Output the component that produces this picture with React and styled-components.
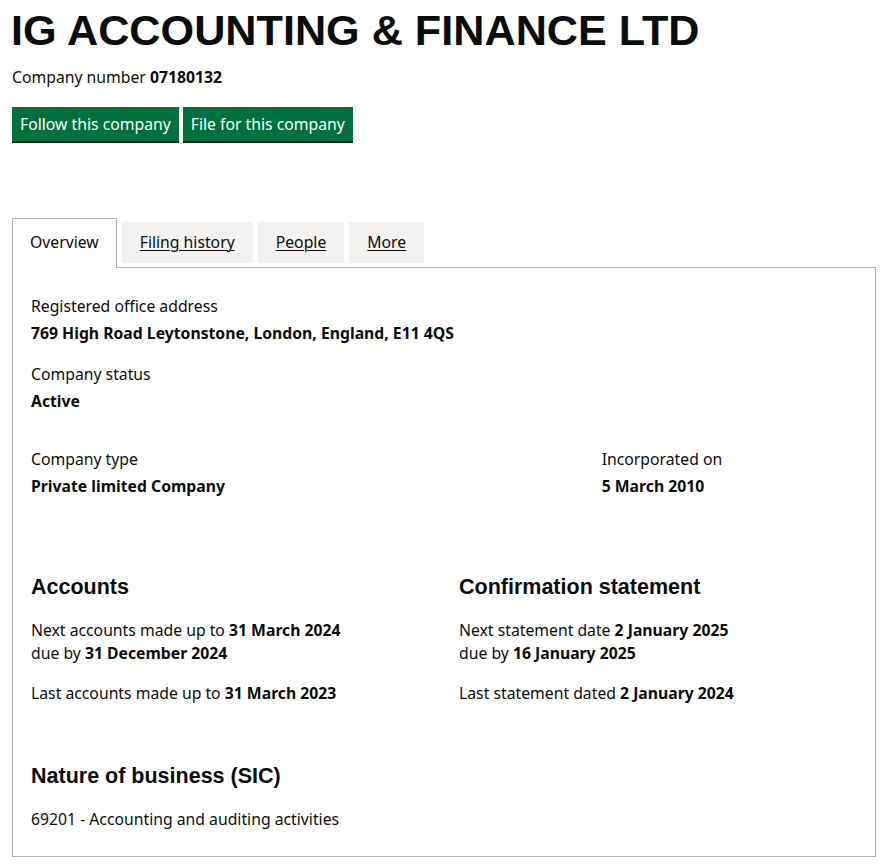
import React from 'react'
import styled, { createGlobalStyle } from 'styled-components'

const GlobalStyle = createGlobalStyle`
  * { box-sizing: border-box; }
  body {
    margin: 0;
    background: #fff;
    color: #0b0c0c;
    font-family: "Noto Sans", "Liberation Sans", Arial, sans-serif;
    font-size: 15.75px;
    line-height: 23px;
  }
`

const Page = styled.main`
  width: 864px;
  margin-left: 12px;
  padding-top: 9px;
  padding-bottom: 9px;
`

const Title = styled.h1`
  margin: 0 0 0 -1px;
  font-family: "Liberation Sans", Arial, sans-serif;
  font-weight: 700;
  font-size: 43.2px;
  line-height: 43px;
`

const CompanyNumber = styled.p`
  margin: 14px 0 0;
`

const ButtonGroup = styled.div`
  display: flex;
  gap: 4px;
  margin-top: 18px;
`

const Button = styled.button`
  height: 34px;
  padding: 0 8px;
  border: 0;
  background: #00703c;
  box-shadow: 0 2px 0 #002d18;
  color: #fff;
  font-family: inherit;
  font-size: 15.75px;
  line-height: 34px;
  cursor: pointer;
`

const TabList = styled.ul`
  display: flex;
  align-items: flex-end;
  gap: 5px;
  margin: 77px 0 0;
  padding: 0;
  list-style: none;
`

const Tab = styled.li`
  position: relative;
  z-index: ${p => (p.$active ? 1 : 0)};
  height: ${p => (p.$active ? '50px' : '41px')};
  margin-bottom: ${p => (p.$active ? '-1px' : '4px')};
  padding: ${p => (p.$active ? '12px 17px 0' : '0 18px')};
  background: ${p => (p.$active ? '#fff' : '#f3f2f1')};
  border: ${p => (p.$active ? '1px solid #b1b4b6' : '0')};
  border-bottom: 0;
  display: flex;
  align-items: ${p => (p.$active ? 'flex-start' : 'center')};

  a {
    color: #0b0c0c;
    text-decoration: ${p => (p.$active ? 'none' : 'underline')};
    text-underline-offset: 2px;
    text-decoration-thickness: 1px;
  }
`

const Panel = styled.section`
  border: 1px solid #b1b4b6;
  padding: 27px 18px 25px;
`

const Row = styled.div`
  display: flex;
  margin: ${p => p.$top || 0} -15px 0;
`

const Column = styled.div`
  width: ${p => p.$width};
  padding: 0 15px;
`

const Block = styled.dl`
  margin: ${p => p.$top || 0} 0 0;
`

const Label = styled.dt`
  margin: 0;
`

const Value = styled.dd`
  margin: 4px 0 0;
  font-weight: 700;
`

const Heading = styled.h2`
  margin: ${p => p.$top || 0} 0 0;
  font-family: "Liberation Sans", Arial, sans-serif;
  font-weight: 700;
  font-size: 21.5px;
  line-height: 26px;
`

const Text = styled.p`
  margin: ${p => p.$top || 0} 0 0;
`

const tabs = ['Overview', 'Filing history', 'People', 'More']

export default function App() {
  return (
    <>
      <GlobalStyle />
      <Page>
        <Title>IG ACCOUNTING &amp; FINANCE LTD</Title>
        <CompanyNumber>
          Company number <strong>07180132</strong>
        </CompanyNumber>
        <ButtonGroup>
          <Button>Follow this company</Button>
          <Button>File for this company</Button>
        </ButtonGroup>

        <TabList>
          {tabs.map((t, i) => (
            <Tab key={t} $active={i === 0}>
              <a href="#">{t}</a>
            </Tab>
          ))}
        </TabList>

        <Panel>
          <Block>
            <Label>Registered office address</Label>
            <Value>769 High Road Leytonstone, London, England, E11 4QS</Value>
          </Block>
          <Block $top="18px">
            <Label>Company status</Label>
            <Value>Active</Value>
          </Block>

          <Row $top="35px">
            <Column $width="66.667%">
              <Block>
                <Label>Company type</Label>
                <Value>Private limited Company</Value>
              </Block>
            </Column>
            <Column $width="33.333%">
              <Block>
                <Label>Incorporated on</Label>
                <Value>5 March 2010</Value>
              </Block>
            </Column>
          </Row>

          <Row $top="76px">
            <Column $width="50%">
              <Heading>Accounts</Heading>
              <Text $top="19px">
                Next accounts made up to <strong>31 March 2024</strong>
                <br />
                due by <strong>31 December 2024</strong>
              </Text>
              <Text $top="17px">
                Last accounts made up to <strong>31 March 2023</strong>
              </Text>
            </Column>
            <Column $width="50%">
              <Heading>Confirmation statement</Heading>
              <Text $top="19px">
                Next statement date <strong>2 January 2025</strong>
                <br />
                due by <strong>16 January 2025</strong>
              </Text>
              <Text $top="17px">
                Last statement dated <strong>2 January 2024</strong>
              </Text>
            </Column>
          </Row>

          <Heading $top="58px">Nature of business (SIC)</Heading>
          <Text $top="19px">69201 - Accounting and auditing activities</Text>
        </Panel>
      </Page>
    </>
  )
}
